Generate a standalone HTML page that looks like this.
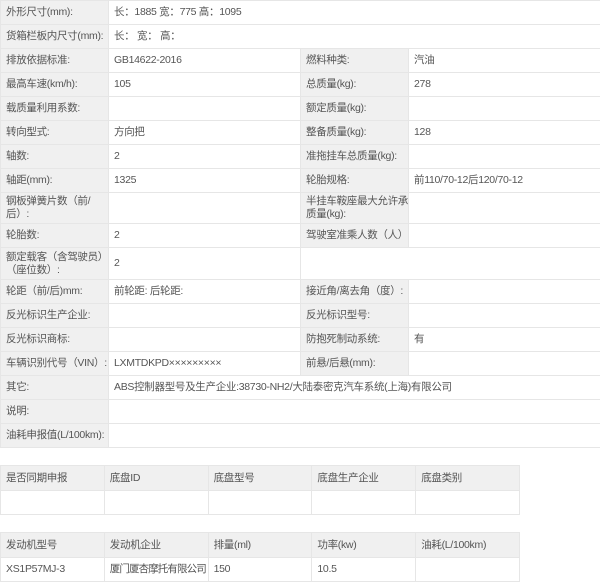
<!DOCTYPE html>
<html><head><meta charset="utf-8"><style>
body{margin:0;background:#fff;font-family:"Liberation Sans","Noto Sans CJK SC",sans-serif;font-size:10.5px;color:#555;}
table{border-collapse:collapse;table-layout:fixed;position:absolute;left:0;}
td{border:1px solid #e6e6e6;padding:0 0 0 5px;vertical-align:middle;line-height:13px;overflow:hidden;white-space:nowrap;letter-spacing:-0.3px;}
td.l{background:#f0f0f0;}
.h td{background:#f0f0f0;}
</style></head><body>
<table style="top:0;width:600px">
<colgroup><col style="width:108px"><col style="width:192px"><col style="width:108px"><col style="width:192px"></colgroup>
<tr style="height:24px"><td class="l">外形尺寸(mm):</td><td colspan="3">长：1885 宽：775 高：1095</td></tr>
<tr style="height:24px"><td class="l">货箱栏板内尺寸(mm):</td><td colspan="3">长： 宽： 高：</td></tr>
<tr style="height:24px"><td class="l">排放依据标准:</td><td>GB14622-2016</td><td class="l">燃料种类:</td><td>汽油</td></tr>
<tr style="height:24px"><td class="l">最高车速(km/h):</td><td>105</td><td class="l">总质量(kg):</td><td>278</td></tr>
<tr style="height:24px"><td class="l">载质量利用系数:</td><td></td><td class="l">额定质量(kg):</td><td></td></tr>
<tr style="height:24px"><td class="l">转向型式:</td><td>方向把</td><td class="l">整备质量(kg):</td><td>128</td></tr>
<tr style="height:24px"><td class="l">轴数:</td><td>2</td><td class="l">准拖挂车总质量(kg):</td><td></td></tr>
<tr style="height:24px"><td class="l">轴距(mm):</td><td>1325</td><td class="l">轮胎规格:</td><td>前110/70-12后120/70-12</td></tr>
<tr style="height:31px"><td class="l">钢板弹簧片数（前/<br>后）:</td><td></td><td class="l">半挂车鞍座最大允许承载<br>质量(kg):</td><td></td></tr>
<tr style="height:24px"><td class="l">轮胎数:</td><td>2</td><td class="l">驾驶室准乘人数（人）:</td><td></td></tr>
<tr style="height:32px"><td class="l">额定载客（含驾驶员）<br>（座位数）:</td><td>2</td><td colspan="2"></td></tr>
<tr style="height:24px"><td class="l">轮距（前/后)mm:</td><td>前轮距: 后轮距:</td><td class="l">接近角/离去角（度）:</td><td></td></tr>
<tr style="height:24px"><td class="l">反光标识生产企业:</td><td></td><td class="l">反光标识型号:</td><td></td></tr>
<tr style="height:24px"><td class="l">反光标识商标:</td><td></td><td class="l">防抱死制动系统:</td><td>有</td></tr>
<tr style="height:24px"><td class="l">车辆识别代号（VIN）:</td><td>LXMTDKPD×××××××××</td><td class="l">前悬/后悬(mm):</td><td></td></tr>
<tr style="height:24px"><td class="l">其它:</td><td colspan="3">ABS控制器型号及生产企业:38730-NH2/大陆泰密克汽车系统(上海)有限公司</td></tr>
<tr style="height:24px"><td class="l">说明:</td><td colspan="3"></td></tr>
<tr style="height:24px"><td class="l">油耗申报值(L/100km):</td><td colspan="3"></td></tr>
</table>
<table style="top:465px;width:520px">
<tr class="h" style="height:25px"><td>是否同期申报</td><td>底盘ID</td><td>底盘型号</td><td>底盘生产企业</td><td>底盘类别</td></tr>
<tr style="height:24px"><td></td><td></td><td></td><td></td><td></td></tr>
</table>
<table style="top:532px;width:520px">
<tr class="h" style="height:25px"><td>发动机型号</td><td>发动机企业</td><td>排量(ml)</td><td>功率(kw)</td><td>油耗(L/100km)</td></tr>
<tr style="height:24px"><td>XS1P57MJ-3</td><td style="letter-spacing:-0.9px">厦门厦杏摩托有限公司</td><td>150</td><td>10.5</td><td></td></tr>
</table>
</body></html>
